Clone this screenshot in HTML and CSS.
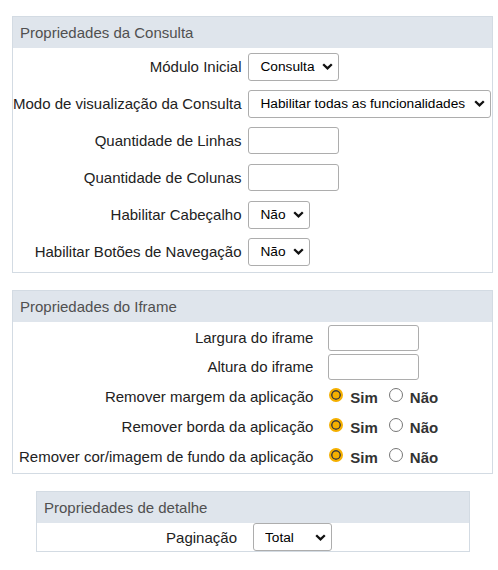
FILE: index.html
```html
<!DOCTYPE html>
<html lang="pt">
<head>
<meta charset="utf-8">
<title>Propriedades</title>
<link rel="stylesheet" href="styles.css">
</head>
<body>
<div class="page">
  <section class="panel panel-wide">
    <div class="panel-head">Propriedades da Consulta</div>
    <div class="grid grid-consulta">
      <label class="lbl">Módulo Inicial</label>
      <div class="ctl"><select class="sel"><option>Consulta</option></select></div>
      <label class="lbl">Modo de visualização da Consulta</label>
      <div class="ctl"><select class="sel sel-modo"><option>Habilitar todas as funcionalidades</option></select></div>
      <label class="lbl">Quantidade de Linhas</label>
      <div class="ctl"><input class="txt" type="text"></div>
      <label class="lbl">Quantidade de Colunas</label>
      <div class="ctl"><input class="txt" type="text"></div>
      <label class="lbl">Habilitar Cabeçalho</label>
      <div class="ctl"><select class="sel"><option>Não</option></select></div>
      <label class="lbl">Habilitar Botões de Navegação</label>
      <div class="ctl"><select class="sel"><option>Não</option></select></div>
    </div>
  </section>

  <section class="panel panel-wide">
    <div class="panel-head">Propriedades do Iframe</div>
    <div class="grid grid-iframe">
      <label class="lbl">Largura do iframe</label>
      <div class="ctl"><input class="txt txt-sm" type="text"></div>
      <label class="lbl">Altura do iframe</label>
      <div class="ctl"><input class="txt txt-sm" type="text"></div>
      <label class="lbl">Remover margem da aplicação</label>
      <div class="ctl radios">
        <input class="rad" type="radio" name="r1" checked><span class="rad-text">Sim</span>
        <input class="rad" type="radio" name="r1"><span class="rad-text">Não</span>
      </div>
      <label class="lbl">Remover borda da aplicação</label>
      <div class="ctl radios">
        <input class="rad" type="radio" name="r2" checked><span class="rad-text">Sim</span>
        <input class="rad" type="radio" name="r2"><span class="rad-text">Não</span>
      </div>
      <label class="lbl">Remover cor/imagem de fundo da aplicação</label>
      <div class="ctl radios">
        <input class="rad" type="radio" name="r3" checked><span class="rad-text">Sim</span>
        <input class="rad" type="radio" name="r3"><span class="rad-text">Não</span>
      </div>
    </div>
  </section>

  <section class="panel panel-narrow">
    <div class="panel-head">Propriedades de detalhe</div>
    <div class="grid grid-detalhe">
      <label class="lbl">Paginação</label>
      <div class="ctl"><select class="sel sel-total"><option>Total</option></select></div>
    </div>
  </section>
</div>
</body>
</html>
```

FILE: styles.css
```css
* { box-sizing: border-box; }

body {
  margin: 0;
  background: #fff;
  font-family: "Liberation Sans", Arial, sans-serif;
  font-size: 15px;
  color: #222;
}

.page {
  padding: 16px 0 0 12px;
}

.panel {
  border: 1px solid #d3dbe3;
  background: #fff;
  margin-bottom: 17px;
}

.panel-wide { width: 481px; }

.panel-narrow {
  width: 434px;
  margin-left: 24px;
}

.panel-head {
  height: 31px;
  line-height: 31px;
  padding-left: 7px;
  background: #dfe5ec;
  color: #505050;
  font-size: 15px;
}

.grid {
  display: grid;
  align-items: center;
}

.grid-consulta {
  grid-template-columns: auto auto;
  justify-content: start;
  grid-auto-rows: 37px;
  column-gap: 7px;
  padding-bottom: 2px;
}

.grid-iframe {
  grid-template-columns: auto auto;
  grid-template-rows: 29px 29px 30px 30px 30px;
  justify-content: start;
  column-gap: 15px;
  padding: 1px 0 2px 6px;
}

.grid-detalhe {
  grid-template-columns: 200px auto;
  justify-content: start;
  column-gap: 16px;
  grid-auto-rows: 28px;
}

.lbl {
  text-align: right;
  white-space: nowrap;
  color: #222;
}

.ctl {
  display: flex;
  align-items: center;
}

.sel {
  -webkit-appearance: none;
  appearance: none;
  height: 28px;
  padding: 0 23px 0 11px;
  font-family: "Liberation Sans", Arial, sans-serif;
  font-size: 13.7px;
  color: #000;
  border: 1px solid #adadad;
  border-radius: 3px;
  background-color: #fff;
  background-image: url("data:image/svg+xml;utf8,<svg xmlns='http://www.w3.org/2000/svg' width='11' height='7' viewBox='0 0 11 7'><path d='M1.2 1.2 L5.5 5.4 L9.8 1.2' fill='none' stroke='%23111' stroke-width='2.3'/></svg>");
  background-repeat: no-repeat;
  background-position: right 5px center;
  background-size: 11px 7px;
  margin: 0;
}

.sel-modo {
  width: 243px;
  padding-right: 18px;
}

.sel-total { width: 79px; }

.txt {
  width: 91px;
  height: 27px;
  border: 1px solid #adadad;
  border-radius: 3px;
  margin: 0;
  padding: 0 4px;
  font-family: "Liberation Sans", Arial, sans-serif;
  font-size: 14px;
}

.txt-sm {
  width: 91px;
  height: 26px;
}

.rad {
  -webkit-appearance: none;
  appearance: none;
  width: 14px;
  height: 14px;
  margin: 0 7px 0 1px;
  border-radius: 50%;
  border: 1px solid #767676;
  background: #fff;
  position: relative;
  top: -1px;
}

.rad:checked {
  border: 2px solid #f5b000;
  background: #f5b000;
  box-shadow: inset 0 0 0 1.5px #3a3a3a;
}

.rad-text {
  font-weight: bold;
  font-size: 15px;
  color: #333;
  margin-right: 10px;
  position: relative;
  top: 1px;
}
```
